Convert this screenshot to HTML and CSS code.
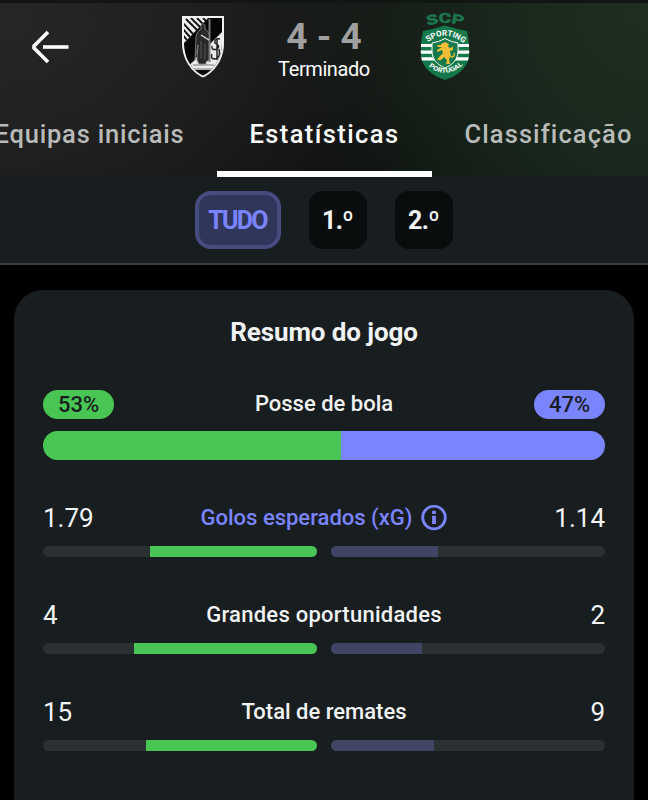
FILE: index.html
```html
<!DOCTYPE html>
<html lang="pt">
<head>
    <meta charset="UTF-8">
    <meta name="viewport" content="width=device-width, initial-scale=1.0">
    <title>Vitória SC 4 - 4 Sporting CP</title>
    <link rel="stylesheet" href="styles.css">
</head>
<body>
    <header class="match-header">
        <div class="match-bar">
            <svg class="back" viewBox="0 0 38 34" fill="none" stroke="#fff" stroke-width="3.6">
                <path d="M17 2 L3 16 V18 L17 32"/>
                <path d="M12 17 H37.500"/>
            </svg>
            <svg class="crest crest-home" viewBox="0 0 44 64">
                <defs>
                    <clipPath id="homeShield">
                        <path d="M3 3 H41 V28 C41 43 33 55 22 60.500 C11 55 3 43 3 28 Z"/>
                    </clipPath>
                </defs>
                <path d="M1 1 H43 V28 C43 44 34 57 22 62.500 C10 57 1 44 1 28 Z" fill="#f2f2f2"/>
                <g clip-path="url(#homeShield)">
                    <rect width="44" height="64" fill="#050505"/>
                    <path d="M0 0 H30 L0 31 Z" fill="#eee"/>
                    <path d="M1 7 L12 19 M1 13 L9 22 M1 19 L6 25 M5 4 L16 15 M10 3 L19 12 M16 3 L22 9 M22 3 L25 6" stroke="#111" stroke-width="1.900"/>
                    <path d="M44 14 V64 H0 L7 51 Z" fill="#ececec"/>
                    <path d="M3 42 L14 31 V45 L8 50 Z" fill="#050505"/>
                    <path d="M8 55 H36 L22 64 Z" fill="#080808"/>
                    <path d="M28.500 4 V47" stroke="#777" stroke-width="2"/>
                    <path d="M20 10 Q22 7 24 10 L24 14 Q29 17 28 23 L28 45 L25 47 V49 H18 L16 45 L17 30 L14 45 L15 21 Q16 16 20 14 Z" fill="#292929" stroke="#888" stroke-width=".8"/>
                    <path d="M20 20 L28 25" stroke="#ddd" stroke-width="1.300"/>
                    <path d="M20 26 V43 M24 29 V44" stroke="#666" stroke-width=".8"/>
                    <path d="M12 50 H33 M10 54 H34" stroke="#777" stroke-width="1.200"/>
                    <path d="M39 24 Q33 23 34 28 Q40 31 36 34 Q30 36 31 31 M38 34 Q40 43 34 44 Q29 44 31 39 M36 24 V45" fill="none" stroke="#222" stroke-width="1.500"/>
                </g>
            </svg>
            <div class="score">
                <div class="result">4 - 4</div>
                <div class="status">Terminado</div>
            </div>
            <svg class="crest crest-away" viewBox="0 0 50 66">
                <defs>
                    <path id="arcScp" d="M6 12.200 Q25 5.500 44 12.200"/>
                    <path id="arcTop" d="M7.500 28.500 Q25 15 42.500 28.500"/>
                    <path id="arcBottom" d="M7 51 Q25 66.500 43 51"/>
                    <clipPath id="awayShield">
                        <path d="M3 17 Q14 15 25 11.500 Q36 15 47 17 Q50 31 49 42 C48 54 37 62 25 66 C13 62 2 54 1 42 Q0 31 3 17 Z"/>
                    </clipPath>
                </defs>
                <g clip-path="url(#awayShield)">
                    <rect width="50" height="66" fill="#14794a"/>
                    <path d="M0 31.500 H50 M0 38.200 H50 M0 44.900 H50" stroke="#fff" stroke-width="3.200"/>
                </g>
                <path d="M12 29 Q19 28 25 24.500 Q31 28 38 29 V37 C38 46 32 51 25 54 C18 51 12 46 12 37 Z" fill="#14794a" stroke="#fff" stroke-width="1"/>
                <path d="M21 30 L25 28 L29 30 L28 33 L31 34 L33 32 V36 L30 37 L31 42 L29 45 L30 50 H26 L27 46 L24 43 L21 46 H17 L20 42 L23 39 L22 36 L17 38 V36 L22 33 L18 33 L17 31 L21 31 Z" fill="#efbd38"/>
                <path d="M31 43 Q35 43 34 39" fill="none" stroke="#efbd38" stroke-width="1.300"/>
                <text class="crest-scp"><textPath href="#arcScp" textLength="36" lengthAdjust="spacingAndGlyphs" startOffset="1.500">SCP</textPath></text>
                <text class="crest-name"><textPath href="#arcTop" textLength="39" lengthAdjust="spacingAndGlyphs" startOffset="0.500">SPORTING</textPath></text>
                <text class="crest-country"><textPath href="#arcBottom" textLength="38" lengthAdjust="spacingAndGlyphs" startOffset="2">PORTUGAL</textPath></text>
            </svg>
        </div>
        <nav class="tabs">
            <a class="tab tab-lineups">Equipas iniciais</a>
            <a class="tab tab-stats active">Estatísticas</a>
            <a class="tab tab-table">Classificação</a>
        </nav>
    </header>

    <div class="periods">
        <button class="chip selected">TUDO</button>
        <button class="chip">1.º</button>
        <button class="chip">2.º</button>
    </div>

    <main class="card">
        <h2>Resumo do jogo</h2>

        <section class="possession">
            <div class="stat-row">
                <span class="pill home">53%</span>
                <span class="label label-possession">Posse de bola</span>
                <span class="pill away">47%</span>
            </div>
            <div class="possession-bar">
                <div class="home" style="width: 53%"></div>
                <div class="away" style="width: 47%"></div>
            </div>
        </section>

        <section class="stat">
            <div class="stat-row">
                <span class="value">1.79</span>
                <span class="label label-xg link">Golos esperados (xG)
                    <svg class="info" viewBox="0 0 26 26" fill="none" stroke="currentColor">
                        <circle cx="13" cy="12.500" r="11.300" stroke-width="2.800"/>
                        <path d="M13 10.800 V19 M13 5.800 V9" stroke-width="3.800"/>
                    </svg>
                </span>
                <span class="value">1.14</span>
            </div>
            <div class="bars">
                <div class="track left"><div class="fill" style="width: 61.1%"></div></div>
                <div class="track right"><div class="fill" style="width: 38.9%"></div></div>
            </div>
        </section>

        <section class="stat">
            <div class="stat-row">
                <span class="value">4</span>
                <span class="label label-chances">Grandes oportunidades</span>
                <span class="value">2</span>
            </div>
            <div class="bars">
                <div class="track left"><div class="fill" style="width: 66.67%"></div></div>
                <div class="track right"><div class="fill" style="width: 33.33%"></div></div>
            </div>
        </section>

        <section class="stat">
            <div class="stat-row">
                <span class="value">15</span>
                <span class="label label-shots">Total de remates</span>
                <span class="value">9</span>
            </div>
            <div class="bars">
                <div class="track left"><div class="fill" style="width: 62.5%"></div></div>
                <div class="track right"><div class="fill" style="width: 37.5%"></div></div>
            </div>
        </section>
    </main>
</body>
</html>
```
FILE: styles.css
```css
* {
    box-sizing: border-box;
}

body {
    margin: 0;
    height: 800px;
    font-family: Roboto, sans-serif;
    background: #000;
    color: #f2f4f5;
    overflow: hidden;
}

.match-header {
    height: 177px;
    border-top: 3px solid #111513;
    border-bottom: 1px solid #1c2223;
    background:
        radial-gradient(ellipse 380px 330px at 100% 0, #202e20 0%, rgba(29, 43, 31, 0.7) 45%, transparent 100%),
        radial-gradient(ellipse 460px 300px at 0 10%, #262626 0%, rgba(36, 36, 36, 0.7) 45%, transparent 100%),
        linear-gradient(90deg, #161616, #0d0f0e 55%, #12231a);
}

.match-bar {
    display: flex;
    align-items: flex-start;
    height: 98px;
    padding-top: 11px;
}

.back {
    width: 38px;
    height: 34px;
    margin: 16px 0 0 31px;
}

.crest-home {
    width: 44px;
    height: 64px;
    margin: 1px 0 0 112px;
}

.score {
    width: 120px;
    margin-left: 39px;
    text-align: center;
    white-space: nowrap;
}

.result {
    padding-top: 1px;
    font-size: 37px;
    line-height: 44px;
    font-weight: 700;
    color: #a0a0a0;
}

.status {
    font-size: 20px;
    line-height: 24px;
    letter-spacing: -0.4px;
    margin-top: -2px;
    color: #fff;
}

.crest-away {
    width: 50px;
    height: 66px;
    margin-left: 36px;
    overflow: visible;
}

.crest text {
    font-family: Roboto, sans-serif;
    font-weight: 700;
}

.crest-scp {
    font-size: 13.5px;
    fill: #1d7550;
    stroke: #1d7550;
    stroke-width: 0.6px;
}

.crest-name {
    font-size: 8px;
    fill: #fff;
}

.crest-country {
    font-size: 6.5px;
    fill: #fff;
}

.tabs {
    display: flex;
    height: 76px;
    margin-left: -38px;
}

.tab {
    flex: none;
    padding-top: 18px;
    font-size: 25.5px;
    line-height: 30px;
    font-weight: 500;
    letter-spacing: 1.1px;
    text-align: center;
    white-space: nowrap;
    color: #b9bbba;
}

.tab-lineups {
    width: 255px;
    letter-spacing: 0.8px;
}

.tab-stats {
    width: 215px;
    letter-spacing: 1.4px;
}

.tab-table {
    width: 233px;
}

.tab.active {
    color: #fff;
    border-bottom: 6px solid #fff;
}

.periods {
    display: flex;
    justify-content: center;
    gap: 28px;
    height: 88px;
    padding: 14px 1px 0 0;
    background: #181d1f;
    border-bottom: 2px solid #3b3f40;
}

.chip {
    width: 58px;
    height: 58px;
    padding: 0;
    border: 0;
    border-radius: 14px;
    background: #0a0d0e;
    font: 700 25px Roboto, sans-serif;
    letter-spacing: -0.7px;
    color: #f2f4f5;
}

.chip.selected {
    width: 86px;
    border: 4px solid #474c80;
    border-radius: 16px;
    background: #30365a;
    letter-spacing: -1.7px;
    color: #7b84ff;
}

.card {
    height: 540px;
    margin: 25px 14px 0;
    padding: 25px 29px 0;
    background: #181d1f;
    border-radius: 29px 29px 0 0;
}

h2 {
    margin: 0;
    font-size: 26px;
    line-height: 35px;
    font-weight: 700;
    letter-spacing: -0.1px;
    text-align: center;
}

.possession {
    margin-top: 39px;
}

.stat-row {
    display: grid;
    grid-template-columns: 1fr auto 1fr;
    align-items: center;
    height: 30px;
}

.stat-row > :last-child {
    justify-self: end;
}

.label {
    font-size: 22px;
    line-height: 30px;
    font-weight: 500;
    white-space: nowrap;
}

.label-chances {
    letter-spacing: 0.25px;
}

.link {
    display: flex;
    align-items: center;
    gap: 9px;
    color: #7b84ff;
}

.info {
    width: 26px;
    height: 26px;
}

.pill {
    width: 71px;
    height: 29px;
    border-radius: 15px;
    font-size: 22px;
    line-height: 29px;
    font-weight: 500;
    text-align: center;
    color: #181d1f;
}

.home {
    background: #48c553;
}

.away {
    background: #7b84ff;
}

.possession-bar {
    display: flex;
    height: 29px;
    margin-top: 12px;
    border-radius: 15px;
    overflow: hidden;
}

.stat {
    height: 54px;
    margin-top: 43px;
}

.value {
    font-size: 26px;
    line-height: 30px;
}

.bars {
    display: flex;
    gap: 14px;
    margin-top: 13px;
}

.track {
    display: flex;
    flex: 1;
    height: 11px;
    border-radius: 6px;
    background: #2b3032;
    overflow: hidden;
}

.left {
    justify-content: flex-end;
}

.left .fill {
    background: #48c553;
}

.right .fill {
    background: #404566;
}
```
